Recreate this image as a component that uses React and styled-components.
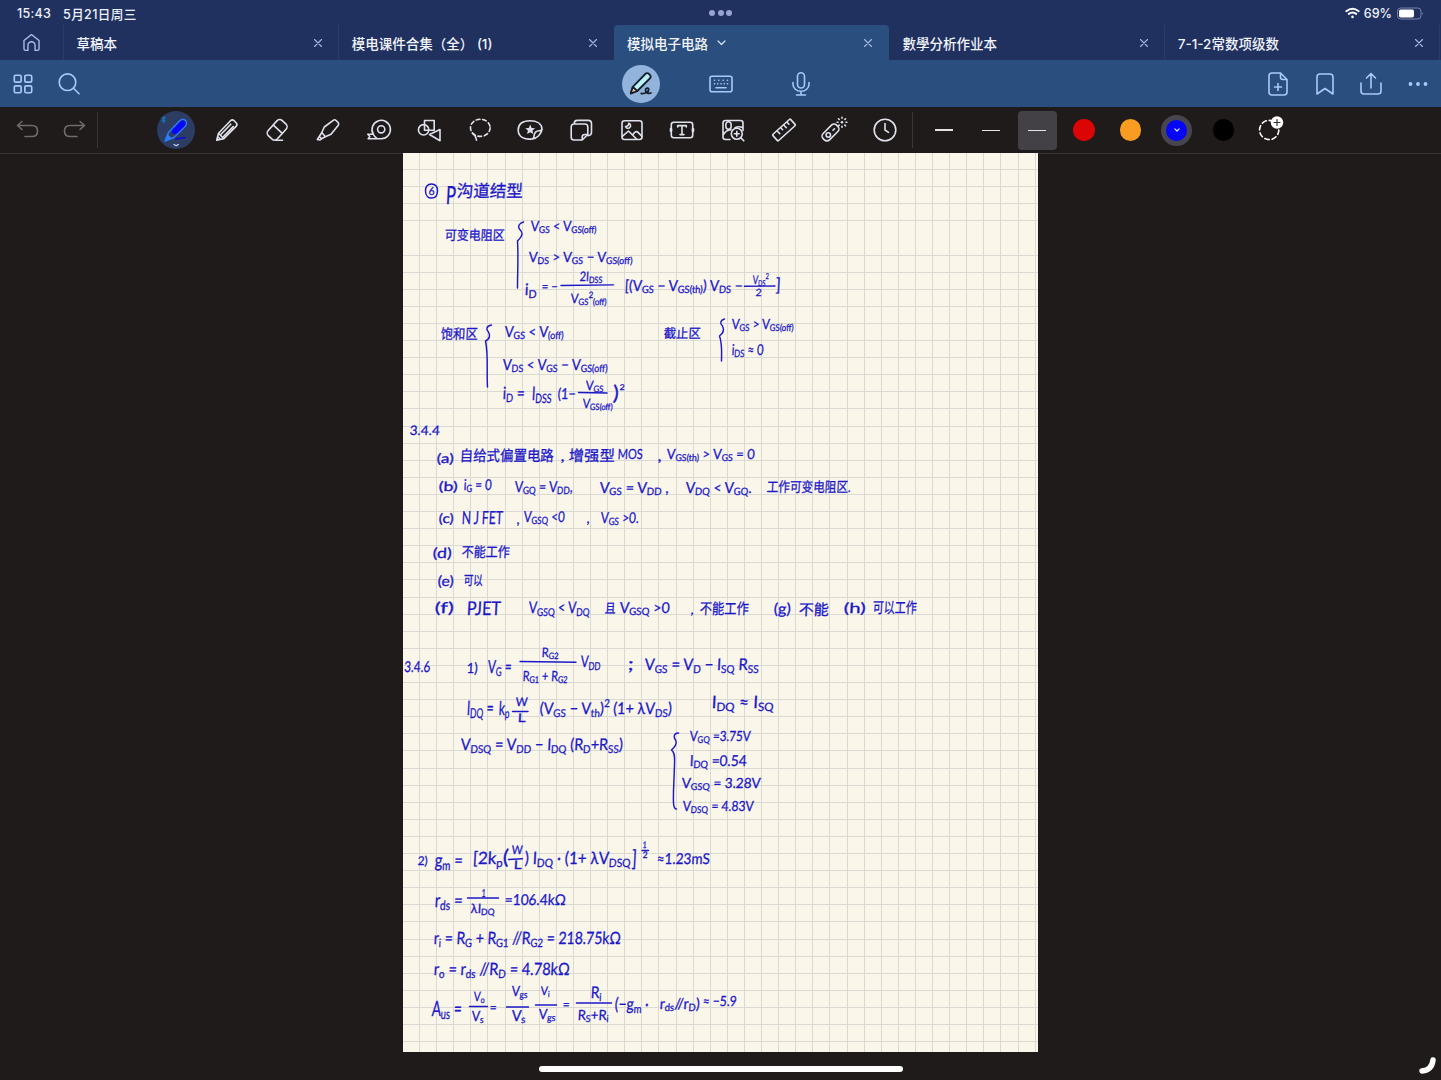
import React from 'react';
import styled, { createGlobalStyle } from 'styled-components';

const Global = createGlobalStyle`
  * { box-sizing: border-box; }
  html, body { margin: 0; padding: 0; background: #1f1b1a; }
  body { font-family: Inter, "Noto Sans CJK SC", sans-serif; overflow: hidden; }
`;

const Screen = styled.div`
  position: relative;
  width: 1441px;
  height: 1080px;
  display: flex;
  flex-direction: column;
  background: #1f1b1a;
  overflow: hidden;
`;

const StatusBar = styled.div`
  height: 25px;
  flex: none;
  display: grid;
  grid-template-columns: 1fr auto 1fr;
  align-items: center;
  padding: 1px 17px 0;
  background: #203160;
  color: #eef1fa;
  font-size: 12.5px;
  font-weight: 500;
`;

const StatusGroup = styled.div`
  display: flex;
  align-items: center;
  justify-content: ${(p) => (p.$end ? 'flex-end' : 'flex-start')};
  gap: ${(p) => (p.$end ? '4px' : '12px')};
  white-space: nowrap;
`;

const Clock = styled.span`
  letter-spacing: 0.25px;
`;

const DateText = styled.span`
  letter-spacing: 0.35px;
  font-size: 12.6px;
`;

const Dots = styled.div`
  display: flex;
  gap: 2.6px;
  span { width: 6px; height: 6px; border-radius: 50%; background: #98a3d3; }
`;

const TabBar = styled.div`
  height: 35px;
  flex: none;
  display: flex;
  background: #203160;
`;

const HomeTab = styled.div`
  width: 63.5px;
  flex: none;
  display: flex;
  align-items: center;
  justify-content: center;
  border-right: 1px solid #2b3b6c;
`;

const Tab = styled.div`
  width: 275.3px;
  flex: none;
  display: flex;
  align-items: center;
  gap: 9px;
  padding: 0 16px 0 13px;
  color: #f2f4fb;
  font-size: 13.5px;
  font-weight: 500;
  background: ${(p) => (p.$active ? '#2a4e7e' : 'transparent')};
  border-right: 1px solid ${(p) => (p.$plain ? 'transparent' : '#2b3b6c')};
  border-radius: ${(p) => (p.$active ? '4px 4px 0 0' : '0')};
`;

const TabTitle = styled.span`
  white-space: nowrap;
`;

const CloseSlot = styled.span`
  margin-left: auto;
  display: flex;
`;

const NavBar = styled.div`
  height: 47px;
  flex: none;
  display: grid;
  grid-template-columns: 1fr 240px 1fr;
  background: #2a4e7e;
`;

const NavGroup = styled.div`
  display: flex;
  align-items: center;
  justify-content: ${(p) => p.$align || 'flex-start'};
`;

const NavSlot = styled.div`
  width: ${(p) => p.$w}px;
  flex: none;
  display: flex;
  justify-content: center;
`;

const ModeCircle = styled.div`
  width: 38px;
  height: 38px;
  border-radius: 50%;
  background: #92b3dc;
  display: flex;
  align-items: center;
  justify-content: center;
`;

const ToolBar = styled.div`
  height: 46px;
  flex: none;
  display: flex;
  align-items: center;
  background: #1f1b1a;
`;

const History = styled.div`
  width: 98px;
  height: 36px;
  display: flex;
  align-items: center;
  gap: 22px;
  padding-left: 16px;
  border-right: 1px solid #3a3635;
`;

const Tools = styled.div`
  display: flex;
  align-items: center;
  margin-left: 52.7px;
  height: 36px;
`;

const ToolSlot = styled.div`
  width: 50.63px;
  display: flex;
  justify-content: center;
`;

const ActiveTool = styled.div`
  width: 38px;
  height: 38px;
  border-radius: 50%;
  background: #2c3c63;
`;

const Presets = styled.div`
  display: flex;
  align-items: center;
  height: 36px;
  margin-left: 2px;
  padding-left: 8px;
  border-left: 1px solid #3a3635;
`;

const PresetSlot = styled.div`
  width: 46.5px;
  display: flex;
  justify-content: center;
`;

const StrokeButton = styled.div`
  width: 39px;
  height: 39px;
  border-radius: 4px;
  background: ${(p) => (p.$active ? '#444146' : 'transparent')};
  display: flex;
  align-items: center;
  justify-content: center;
  &::after {
    content: '';
    width: 18px;
    height: ${(p) => p.$weight}px;
    background: #e4e4e6;
  }
`;

const Swatch = styled.div`
  width: ${(p) => (p.$active ? 31 : 21.5)}px;
  height: ${(p) => (p.$active ? 31 : 21.5)}px;
  border-radius: 50%;
  background: ${(p) => p.$color};
  border: ${(p) => (p.$active ? '5px solid #47454d' : 'none')};
  display: flex;
  align-items: center;
  justify-content: center;
`;

const Workspace = styled.div`
  height: 899px;
  flex: none;
  display: flex;
  padding-left: 402.5px;
  border-top: 1px solid #383433;
`;

const Paper = styled.div`
  width: 635.5px;
  height: 899px;
  margin-top: -1px;
  background-color: #faf7ea;
  background-image:
    repeating-linear-gradient(to right, transparent 0 16.1px, #dbd9d3 16.1px 17.1px),
    repeating-linear-gradient(to bottom, transparent 0 16.1px, #dbd9d3 16.1px 17.1px);
`;

const Ink = styled.svg`
  display: block;
  overflow: hidden;
  font-family: Lato, "Noto Sans CJK SC", sans-serif;
  fill: #1c18c9;
  text { stroke: #1c18c9; stroke-width: 0.3; }
  path { fill: none; stroke: #1c18c9; stroke-width: 1.45; stroke-linecap: round; stroke-linejoin: round; }
`;

const Footer = styled.div`
  flex: 1;
  display: flex;
  justify-content: center;
  align-items: center;
  padding-top: 6px;
`;

const HomeIndicator = styled.div`
  width: 364px;
  height: 6px;
  border-radius: 3px;
  background: #fff;
`;

const Corner = styled.svg`
  position: absolute;
  right: 0;
  bottom: 0;
`;

const Line = styled.svg`
  display: block;
  flex: none;
  overflow: visible;
  fill: none;
  stroke: ${(p) => p.$color || '#dfe2ec'};
  stroke-width: ${(p) => p.$weight || 1.6};
  stroke-linecap: round;
  stroke-linejoin: round;
`;

const Icon = ({ size = 24, color, weight, children }) => (
  <Line width={size} height={size} viewBox="0 0 24 24" $color={color} $weight={weight}>{children}</Line>
);

const Close = () => (
  <CloseSlot>
    <Line width="8" height="8" viewBox="0 0 8 8" $color="#a9b9e3" $weight={1.1}><path d="M.5.5l7 7M7.5.5l-7 7" /></Line>
  </CloseSlot>
);

const toolIcons = [
  <Icon key="pencil">
    <path d="M1.7 22.2 3.5 15.2 15.500 2.800q1.800-1.800 3.600 0l2 2q1.800 1.800 0 3.600L8.800 20.600zM3.500 15.200l5.300 5.400M15.800 6.200 6.300 16M18.200 8.600l-9.500 9.600M1.700 22.200l1-3.600 2.600 2.600z" />
  </Icon>,
  <Icon key="eraser">
    <rect x="5.800" y="1.500" width="12.400" height="20.500" rx="3.800" transform="rotate(42 12 12)" />
    <path d="M8.600 7.400l8.700 7.900M10 22.200h7.500" />
  </Icon>,
  <Icon key="marker">
    <path d="M5.800 14.500 8.300 9 17.200 2.300q1.500-1.100 2.900.2l1.900 1.900q1.300 1.400.3 2.900L15 16.300l-5.700 2.400zM5.800 14.500l-2.500 4 2.200 2.300 3.800-2.100M3.300 18.500l-2 3 2.800.5 1.400-1.200" />
  </Icon>,
  <Icon key="tape">
    <path d="M6.300 16.200A9.200 9.200 0 1 1 14.200 20.700H1.200l1.600-2.200-2-2.300 5.500 0q1.300 3 4 4.500" />
    <circle cx="14.200" cy="11.300" r="3.600" />
  </Icon>,
  <Icon key="shapes">
    <path d="M7.500 6V2.500h9.700v9.700h-4.500" /><circle cx="6.600" cy="11.800" r="5.200" />
    <path d="M12.500 16.500 23 11.500v11.300zM11.500 12.200H7.500V7" />
  </Icon>,
  <Icon key="lasso">
    <ellipse cx="12.300" cy="9.800" rx="9.800" ry="8.600" strokeDasharray="3.8 2.700" />
    <path d="M4.500 15.500q3.200 1.500 4 6.700" />
  </Icon>,
  <Icon key="sticker">
    <path d="M14.500 20.900C7 22 .2 19.300.2 12 .2 5 5.400 2.700 12 2.700s12 2.800 12 8.800c-.8 4.600-5 8.900-9.500 9.400zM14.500 20.700c1.600-.7 1.600-2.700 1.800-4 .5-2.800 2.700-3.900 4.700-4 1.300 0 2.300-.3 2.900-1.200" />
    <path d="m12.200 6.600 1.400 3.300 3.500.3-2.600 2.400.8 3.500-3.100-1.900-3.100 1.900.8-3.500-2.600-2.400 3.500-.3z" fill="#dfe2ec" stroke="none" />
  </Icon>,
  <Icon key="notes">
    <path d="M13.200 22H5q-2.800 0-2.800-2.800V9Q2.200 6 5 6h11q2.800 0 2.800 3v7.500zM13.200 22v-3q0-2.500 2.800-2.500h2.800M5.200 5.800q0-3.400 3-3.400h11q3.300 0 3.300 3.300V14q0 3.500-3.500 3.700" />
  </Icon>,
  <Icon key="image">
    <rect x="2" y="2.700" width="20" height="18.800" rx="2.500" />
    <path d="M2.300 18.300 8.500 13l8 8M13 16.500l1.300-1.700q2-2.300 4-.2l3.500 3.700M5.500 8.500a2.600 2.600 0 1 0 3.200-3.300c.3 2-1.200 3.300-3.200 3.300z" />
  </Icon>,
  <Icon key="text">
    <rect x="1.300" y="4.300" width="21.400" height="15.500" rx="2.500" />
    <path d="M7.700 9V7.600h8.600V9M12 7.800v8.700M10 16.600h4" /><path d="M1 11v2M23 11v2" strokeWidth="2.600" />
  </Icon>,
  <Icon key="imagesearch">
    <path d="M9 21.500H4.500Q2 21.500 2 19V5Q2 2.500 4.500 2.500h15Q22 2.500 22 5v7.500M2.400 16.500c2-3.700 4.500-4.500 7.600-4.800M21.500 9.500c-3-1.200-5.500-.8-7.500.2" />
    <ellipse cx="7.500" cy="7.500" rx="2.700" ry="3.800" /><circle cx="15.800" cy="15.800" r="5.500" />
    <path d="M19.900 19.900l2.900 2.900M13.400 15.800h4.800M15.800 13.400v4.800" />
  </Icon>,
  <Icon key="ruler">
    <rect x="0" y="7.800" width="24" height="8.400" rx="1" transform="rotate(-42 12 12)" />
    <path d="M5.400 13.200l2.400 2.500M9 10l1.600 1.700M12 7.300l2.300 2.400M15.300 4.500l1.600 1.700" />
  </Icon>,
  <Icon key="laser">
    <rect x="-1" y="10" width="19" height="9" rx="3.600" transform="rotate(-45 8.500 14.500)" />
    <circle cx="6.300" cy="17" r="2.200" /><path d="M11 12.300l1.500-1.500" />
    <circle cx="20" cy="4.300" r="1.300" fill="#dfe2ec" stroke="none" />
    <path d="M20-.6v.9M20 8.300v.9M15.100 4.300h.9M24 4.300h.9M16.500.8l.7.700M22.800 7.100l.7.700M16.500 7.800l.7-.7M22.800 1.500l.7-.7" />
  </Icon>,
  <Icon key="clock">
    <circle cx="12" cy="12" r="10.800" /><path d="M12 5.500V12l3.500 2.300" />
  </Icon>,
];

/* Each note is [x, baseline, width, size, text]; _{ } lowers and ^{ } raises a run. */
const notes = [
  [428, 195, 6, 11, '6'], [445, 204, 10, 25, 'P'], [456, 197, 66, 17, '沟道结型'],
  [444, 240, 60, 13.5, '可变电阻区'],
  [530, 231, 66, 14, 'V_{GS} < V_{GS(off)}'],
  [528, 262, 104, 14, 'V_{DS} > V_{GS}  − V_{GS(off)}'],
  [524, 295, 12, 16, 'i_{D}'], [541, 291, 16, 13, '= −'], [579, 281, 23, 13, '2I_{DSS}'], [570, 303, 36, 13, 'V_{GS}^{2}_{(off)}'],
  [624, 291, 118, 15, '[(V_{GS} − V_{GS(th)}) V_{DS} −'], [752, 284, 16, 12, 'V_{DS}^{2}'], [755, 296, 6, 10, '2'], [775, 291, 5, 18, ']'],
  [440, 339, 37, 14, '饱和区'], [504, 337, 59, 15, 'V_{GS} < V_{(off)}'],
  [502, 370, 105, 15, 'V_{DS} < V_{GS} − V_{GS(off)}'],
  [502, 399, 22, 17, 'i_{D} ='], [531, 400, 20, 19, 'I_{DSS}'], [557, 399, 18, 15, '(1−'], [585, 390, 18, 13, 'V_{GS}'], [582, 408, 30, 13, 'V_{GS(off)}'], [612, 400, 6, 20, ')'], [619, 390, 5, 8, '2'],
  [663, 338, 37, 13, '截止区'], [731, 329, 62, 14, 'V_{GS} > V_{GS(off)}'], [731, 355, 32, 15, 'i_{DS} ≈ 0'],
  [409, 435, 30, 13, '3.4.4'],
  [436, 463, 17, 13, '(a)'], [459, 461, 94, 15, '自给式偏置电路'], [560, 461, 4, 14, ','], [568, 461, 46, 15, '增强型'], [617, 459, 25, 14, 'MOS'], [657, 461, 4, 14, ','],
  [666, 459, 88, 14, 'V_{GS(th)} > V_{GS} = 0'],
  [438, 491, 19, 13, '(b)'], [463, 490, 28, 15, 'i_{G} = 0'], [514, 492, 58, 15, 'V_{GQ} = V_{DD},'], [599, 493, 69, 15, 'V_{GS} = V_{DD}  ,'],
  [685, 493, 66, 15, 'V_{DQ} < V_{GQ}.'], [766, 492, 84, 14, '工作可变电阻区.'],
  [438, 523, 15, 13, '(c)'], [461, 524, 41, 18, 'N J FET'], [516, 524, 3, 14, ','], [523, 522, 41, 15, 'V_{GSQ} <0'], [586, 523, 3, 14, ','], [600, 523, 38, 15, 'V_{GS} >0.'],
  [432, 558, 19, 14, '(d)'], [461, 557, 48, 14, '不能工作'],
  [437, 586, 16, 14, '(e)'], [463, 585, 19, 13, '可以'],
  [434, 613, 19, 15, '(f)'], [466, 615, 34, 19, 'PJET'], [528, 613, 61, 16, 'V_{GSQ} < V_{DQ}'], [604, 613, 11, 13, '且'], [619, 613, 50, 15, 'V_{GSQ} >0'],
  [690, 614, 3, 13, ','], [699, 614, 49, 15, '不能工作'], [773, 614, 17, 15, '(g)'], [798, 615, 30, 15, '不能'], [843, 613, 22, 14, '(h)'], [872, 613, 44, 15, '可以工作'],
  [403.5, 672, 26, 15, '3.4.6'], [466, 673, 11, 14, '1)'], [487, 673, 24, 18, 'V_{G} ='], [541, 657, 17, 13, 'R_{G2}'], [522, 681, 45, 14, 'R_{G1} + R_{G2}'],
  [580, 667, 20, 16, 'V_{DD}'], [627, 670, 6, 18, ';'], [644, 670, 114, 16, 'V_{GS} = V_{D} − I_{SQ} R_{SS}'],
  [466, 715, 27, 20, 'I_{DQ} ='], [498, 715, 11, 19, 'k_{p}'], [515, 706, 12, 12, 'W'], [517, 722, 8, 12, 'L'], [539, 714, 132, 16, '(V_{GS} − V_{th})^{2} (1+ λV_{DS})'], [711, 708, 62, 17, 'I_{DQ} ≈ I_{SQ}'],
  [460, 750, 162, 16, 'V_{DSQ} = V_{DD} − I_{DQ} (R_{D}+R_{SS})'],
  [689, 741, 61, 14, 'V_{GQ} =3.75V'], [689, 766, 57, 15, 'I_{DQ} =0.54'], [681, 788, 79, 14, 'V_{GSQ} =  3.28V'], [682, 811, 71, 14, 'V_{DSQ} = 4.83V'],
  [417, 865, 10, 12, '2)'], [434, 867, 28, 19, 'g_{m} ='], [472, 864, 30, 17, '[2k_{p}'], [502, 864, 6, 20, '('], [511, 854, 11, 12, 'W'], [513, 869, 8, 12, 'L'], [524, 864, 106, 17, ') I_{DQ} · (1+ λV_{DSQ}'], [631, 866, 5, 22, ']'],
  [642, 848, 4, 9, '1'], [642, 858, 5, 9, '2'], [656, 864, 53, 15, '≈1.23mS'],
  [434, 907, 28, 19, 'r_{ds} ='], [481, 897, 4, 11, '1'], [470, 913, 24, 13, 'λI_{DQ}'], [504, 905, 61, 15, '=106.4kΩ'],
  [433, 944, 187, 17, 'r_{i} = R_{G} +  R_{G1} //R_{G2} = 218.75kΩ'],
  [433, 975, 136, 17, 'r_{o} = r_{ds} //R_{D} = 4.78kΩ'],
  [431, 1016, 30, 21, 'A_{us} ='], [473, 1001, 11, 13, 'V_{o}'], [471, 1021, 12, 14, 'V_{s}'], [489, 1012, 7, 13, '='], [511, 996, 16, 14, 'V_{gs}'], [511, 1021, 14, 15, 'V_{s}'], [540, 995, 9, 12, 'V_{i}'], [538, 1019, 17, 14, 'V_{gs}'],
  [562, 1009, 7, 13, '='], [590, 998, 11, 16, 'R_{i}'], [577, 1020, 31, 14, 'R_{S}+R_{i}'], [614, 1010, 34, 17, '(−g_{m} ·'], [659, 1009, 40, 15, 'r_{ds}//r_{D})'], [702, 1006, 34, 14, '≈ −5.9'],
];

const marks = [
  'M431 184c-4 0-6 3-6 7 0 5 3 7 6 7 4 0 6-3 6-7s-2-7-6-7',
  'M523 222c-4 1-6 4-4 7 4 4 3 7-2 12 1 15 0 32 0 47',
  'M560.5 285.5l52.500-.6M744 286.300l30.500-.3',
  'M491 325c-5 1-6 4-3 7 2 4 1 7-3 9 3 14 1 30 2 46',
  'M578 392.500l28.500.5M724 319c-4 1-5 4-2 7 2 4 1 7-3 10 3 8 2 17 2 25',
  'M519.500 661.500l56 .7M512 711.500h15.500',
  'M678 733c-5 0-5 4-3 7 2 4-1 7-4 10 4 3 3 9 3 15l-1 26c0 8-1 18 3 18',
  'M508 859.500l14-.7M641.500 850.500h6.500M467 898h31',
  'M469 1006.500h18M506 1007h22M535 1005h21M576 1003h35',
];

const runs = (text) => {
  const parts = text.match(/[_^]\{[^}]*\}|[^_^]+/g) || [];
  let level = 0;
  return parts.map((part) => {
    const next = part[0] === '_' ? 0.16 : part[0] === '^' ? -0.42 : 0;
    const shift = next - level;
    level = next;
    return { body: next ? part.slice(2, -1) : part, shift, small: next !== 0 };
  });
};

const Note = ({ note: [x, y, w, size, text] }) => (
  <text transform={`translate(${x} ${y}) skewX(-3)`} textLength={w} lengthAdjust="spacingAndGlyphs" fontSize={size}>
    {runs(text).map((r, i) => (
      <tspan key={i} dy={r.shift * size} fontSize={r.small ? size * 0.68 : size}>{r.body}</tspan>
    ))}
  </text>
);

const BLUE = '#a9c9fa';

export default function App() {
  return (
    <Screen>
      <Global />
      <StatusBar>
        <StatusGroup><Clock>15:43</Clock><DateText>5月21日周三</DateText></StatusGroup>
        <Dots><span /><span /><span /></Dots>
        <StatusGroup $end>
          <Line width="15" height="12" viewBox="0 0 15 12" $color="#fff" $weight={2}>
            <path d="M1.300 4.200q6.200-5 12.400 0M3.800 6.900q3.700-2.800 7.400 0" /><path d="M7.500 9.800v.2" strokeWidth="2.500" />
          </Line>
          <span>69%</span>
          <svg width="28" height="13" viewBox="0 0 28 13">
            <rect x="1.500" y="1" width="23.500" height="11" rx="3.200" fill="none" stroke="#7883a7" />
            <rect x="3" y="2.500" width="15" height="8" rx="1.800" fill="#fff" /><path d="M26.500 4.800q1.500 1.700 0 3.400z" fill="#7883a7" />
          </svg>
        </StatusGroup>
      </StatusBar>

      <TabBar>
        <HomeTab><Icon size={19} color="#b1bfe9" weight={1.7}><path d="M2.500 9.500 12 2l9.500 7.500V20q0 2-2 2h-3v-6.500a4.500 4.500 0 0 0-9 0V22h-3q-2 0-2-2z" /></Icon></HomeTab>
        <Tab><TabTitle>草稿本</TabTitle><Close /></Tab>
        <Tab $plain><TabTitle>模电课件合集（全） (1)</TabTitle><Close /></Tab>
        <Tab $active $plain>
          <TabTitle>模拟电子电路</TabTitle>
          <Line width="9" height="6" viewBox="0 0 9 6" $color="#d7e3fa" $weight={1.200}><path d="M1 1l3.500 3.500L8 1" /></Line>
          <Close />
        </Tab>
        <Tab><TabTitle>數學分析作业本</TabTitle><Close /></Tab>
        <Tab><TabTitle>7-1-2常数项级数</TabTitle><Close /></Tab>
      </TabBar>

      <NavBar>
        <NavGroup>
          <NavSlot $w={46}>
            <Icon size={22} color={BLUE} weight={1.800}>
              <rect x="2.500" y="2.500" width="7.500" height="7.500" rx="1.500" /><rect x="14" y="2.500" width="7.500" height="7.500" rx="1.500" />
              <rect x="2.500" y="14" width="7.500" height="7.500" rx="1.500" /><rect x="14" y="14" width="7.500" height="7.500" rx="1.500" />
            </Icon>
          </NavSlot>
          <NavSlot $w={46}><Icon color={BLUE}><circle cx="10.500" cy="10.200" r="8.300" /><path d="M16.500 16.300l5.500 5.500" /></Icon></NavSlot>
        </NavGroup>
        <NavGroup>
          <NavSlot $w={80}>
            <ModeCircle>
              <Icon color="#17202a" weight={1.800}>
                <path d="M1.800 21.500 3.800 14.800 16.300 2q1.800-1.800 3.700 0l.8.800q1.800 1.900 0 3.700L8.300 19z" fill="#baf2fa" />
                <path d="M3.800 14.800 8.300 19l-6.500 2.500z" fill="#efc8a0" />
                <path d="M12.300 21.500c4.500.3 7.600-1.500 7.400-4.200-.3-2-3.200-1.500-3.200.8 0 2.700 2.700 4 5.500 2.900" />
              </Icon>
            </ModeCircle>
          </NavSlot>
          <NavSlot $w={80}>
            <Icon color={BLUE}><rect x="1" y="4.200" width="22" height="15.500" rx="2" /><path d="M7 15.700h10" /><path d="M5.500 8.300h.1M9.800 8.300h.1M14.100 8.300h.1M18.400 8.300h.1M5.500 11.700h.1M8.700 11.700h.1M12 11.700h.1M15.300 11.700h.1M18.500 11.700h.1" /></Icon>
          </NavSlot>
          <NavSlot $w={80}>
            <Icon color={BLUE}><rect x="8.500" y=".800" width="7" height="15.200" rx="3.500" /><path d="M4 10.500v1.800a8 7 0 0 0 16 0v-1.800M12 19.500V23M7.500 23h9" /></Icon>
          </NavSlot>
        </NavGroup>
        <NavGroup $align="flex-end">
          <NavSlot $w={46.500}><Icon color={BLUE}><path d="M14.500 1H6Q3 1 3 4v16q0 3 3 3h12q3 0 3-3V7.500zM14.500 1v4q0 2.500 2.500 2.500h4M12 11.500v7M8.500 15h7" /></Icon></NavSlot>
          <NavSlot $w={46.500}><Icon color={BLUE}><path d="M4 22V5q0-3 3-3h10q3 0 3 3v17l-8-5.500z" /></Icon></NavSlot>
          <NavSlot $w={46.500}><Icon color={BLUE}><path d="M2 11v8q0 3 3 3h14q3 0 3-3v-8M12 16V2M7.500 6 12 1.700 16.500 6" /></Icon></NavSlot>
          <NavSlot $w={46.500}><Icon color={BLUE} weight={3.800}><path d="M4.500 12h.01M12 12h.01M19.500 12h.01" /></Icon></NavSlot>
        </NavGroup>
      </NavBar>

      <ToolBar>
        <History>
          <Icon color="#6d6b6b"><path d="M6 3.500 1.500 7.500l4.500 4M1.500 7.500H16q5.500 0 5.500 5.500T16 18.500H9" /></Icon>
          <Icon color="#6d6b6b"><path d="M18 3.500l4.500 4-4.500 4M22.500 7.500H8Q2.500 7.500 2.500 13T8 18.500h7" /></Icon>
        </History>
        <Tools>
          <ToolSlot>
            <ActiveTool>
              <Line width="38" height="38" viewBox="0 0 38 38" $color="#2b7dff" $weight={1.500}>
                <path d="M8 30l3.500-8.500L22.500 10q3-3 5.500-1t.500 6L17 26.500z" fill="#2c3c63" />
                <path d="M15.500 18.500l8-8q2.500-1.800 4.300 0t0 4.300l-8 8q-3 .800-4.300-.5t0-3.800z" fill="#0606fb" stroke="none" />
                <path d="M8 30l3-6.500 3.500 3.500z" fill="#2b7dff" stroke="none" />
                <path d="M18.500 28l9.500-1.500" stroke="#0909e5" strokeWidth="1.600" />
                <path d="M4.800 7l3.400 3-1.700 1.700V5.300L8.200 7l-3.400 3" stroke="#176fac" strokeWidth="1.200" />
                <path d="M17 33.500l2.200 1.300 2.200-1.300" stroke="#c9d8f7" strokeWidth="1.200" />
              </Line>
            </ActiveTool>
          </ToolSlot>
          {toolIcons.map((icon) => <ToolSlot key={icon.key}>{icon}</ToolSlot>)}
        </Tools>
        <Presets>
          <PresetSlot><StrokeButton $weight={1.500} /></PresetSlot>
          <PresetSlot><StrokeButton $weight={1} /></PresetSlot>
          <PresetSlot><StrokeButton $weight={1} $active /></PresetSlot>
          <PresetSlot><Swatch $color="#db0505" /></PresetSlot>
          <PresetSlot><Swatch $color="#f99d22" /></PresetSlot>
          <PresetSlot><Swatch $color="#0505fa" $active><Line width="6" height="4" viewBox="0 0 6 4" $weight={1.200}><path d="M.8.800 3 3 5.200.8" /></Line></Swatch></PresetSlot>
          <PresetSlot><Swatch $color="#000" /></PresetSlot>
          <PresetSlot>
            <Icon color="#fff"><circle cx="11.200" cy="12" r="9.600" strokeDasharray="4.500 3" /><circle cx="19" cy="4.500" r="6.200" fill="#fff" stroke="none" /><path d="M16 4.500h6M19 1.500v6" stroke="#333" strokeWidth="1.200" /></Icon>
          </PresetSlot>
        </Presets>
      </ToolBar>

      <Workspace>
        <Paper>
          <Ink width="635.500" height="899" viewBox="402.5 153 635.500 899">
            {marks.map((d) => <path key={d} d={d} />)}
            {notes.map((note, i) => <Note key={i} note={note} />)}
          </Ink>
        </Paper>
      </Workspace>

      <Footer><HomeIndicator /></Footer>
      <Corner width="24" height="24" viewBox="0 0 24 24"><path d="M16 4q-1 10-11 11" fill="none" stroke="#fff" strokeWidth="5.500" strokeLinecap="round" /></Corner>
    </Screen>
  );
}
